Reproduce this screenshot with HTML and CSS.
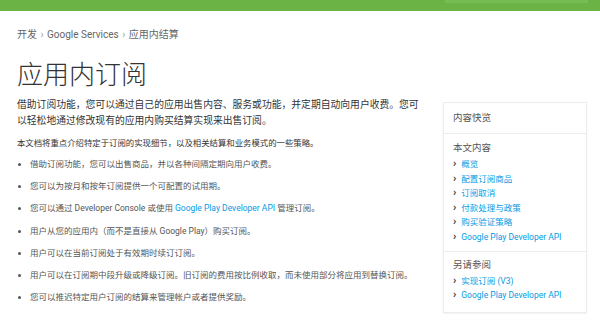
FILE: index.html
```html
<!DOCTYPE html>
<html>
<head>
  <link rel="stylesheet" href="styles.css">
</head>
<body>
  <div class="topbar">
    <div class="search"></div>
  </div>

  <div class="page">
    <div class="content">
      <div class="breadcrumb">开发 <span class="sep">›</span> Google Services <span class="sep">›</span> 应用内结算</div>
      <h1 class="title">应用内订阅</h1>
      <p class="lead">借助订阅功能，您可以通过自己的应用出售内容、服务或功能，并定期自动向用户收费。您可以轻松地通过修改现有的应用内购买结算实现来出售订阅。</p>
      <p class="intro">本文档将重点介绍特定于订阅的实现细节，以及相关结算和业务模式的一些策略。</p>
      <ul class="points">
        <li>借助订阅功能，您可以出售商品，并以各种间隔定期向用户收费。</li>
        <li>您可以为按月和按年订阅提供一个可配置的试用期。</li>
        <li>您可以通过 Developer Console 或使用 <a href="#">Google Play Developer API</a> 管理订阅。</li>
        <li>用户从您的应用内（而不是直接从 Google Play）购买订阅。</li>
        <li>用户可以在当前订阅处于有效期时续订订阅。</li>
        <li>用户可以在订阅期中段升级或降级订阅。旧订阅的费用按比例收取，而未使用部分将应用到替换订阅。</li>
        <li>您可以推迟特定用户订阅的结算来管理帐户或者提供奖励。</li>
      </ul>
      <h2 class="section">订阅</h2>
    </div>

    <div class="toc">
      <div class="toc-head">内容快览</div>
      <div class="toc-block">
        <div class="toc-title">本文内容</div>
        <ul class="toc-list">
          <li><a href="#">概览</a></li>
          <li><a href="#">配置订阅商品</a></li>
          <li><a href="#">订阅取消</a></li>
          <li><a href="#">付款处理与政策</a></li>
          <li><a href="#">购买验证策略</a></li>
          <li><a href="#">Google Play Developer API</a></li>
        </ul>
      </div>
      <div class="toc-block">
        <div class="toc-title">另请参阅</div>
        <ul class="toc-list">
          <li><a href="#">实现订阅 (V3)</a></li>
          <li><a href="#">Google Play Developer API</a></li>
        </ul>
      </div>
    </div>
  </div>
</body>
</html>
```

FILE: styles.css
```css
body {
  margin: 0;
  background: #fff;
  color: #333;
  font-family: Roboto, "Noto Sans CJK SC", sans-serif;
  overflow: hidden;
}

a {
  color: #039be5;
  text-decoration: none;
}

.topbar {
  height: 11px;
  background: #6ab344;
  position: relative;
}

.search {
  position: absolute;
  left: 445px;
  width: 143px;
  top: 0;
  height: 3px;
  background: #78bc56;
}

.page {
  display: flex;
  align-items: flex-start;
}

.content {
  width: 408px;
  margin-left: 17px;
}

.breadcrumb {
  margin-top: 17px;
  font-size: 10px;
  line-height: 14px;
  color: #666;
}

.breadcrumb .sep {
  color: #999;
  margin: 0 1px;
}

.title {
  margin: 17px 0 0;
  font-size: 26px;
  font-weight: 300;
  line-height: 32px;
  color: #333;
}

.lead {
  margin: 6px 0 0;
  font-size: 9.8px;
  line-height: 15.5px;
  color: #333;
}

.intro {
  margin: 8px 0 0;
  font-size: 8.4px;
  line-height: 14px;
  color: #333;
}

.points {
  margin: 7px 0 0;
  padding-left: 13px;
  font-size: 8.5px;
  line-height: 14px;
  color: #555;
}

.points li {
  margin-bottom: 8.2px;
}

.section {
  margin: 17px 0 0;
  font-size: 16px;
  font-weight: 300;
}

.toc {
  width: 142px;
  margin: 91px 0 0 18px;
  border: 1px solid #ececec;
  box-shadow: 0 1px 2px rgba(0, 0, 0, 0.05);
  padding-bottom: 3px;
}

.toc-head {
  padding: 8px 9px;
  font-size: 9.5px;
  line-height: 14px;
  color: #555;
  border-bottom: 1px solid #ececec;
}

.toc-block {
  padding: 7px 9px 6px;
}

.toc-block + .toc-block {
  border-top: 1px solid #ececec;
  padding-top: 6px;
}

.toc-title {
  font-size: 9.5px;
  line-height: 14px;
  color: #555;
  margin-bottom: 2px;
}

.toc-list {
  list-style: none;
  margin: 0;
  padding: 0;
  font-size: 8.5px;
  line-height: 14.6px;
}

.toc-list li::before {
  content: "›";
  font-weight: bold;
  color: #333;
  font-size: 11px;
  margin-right: 5px;
}
```
